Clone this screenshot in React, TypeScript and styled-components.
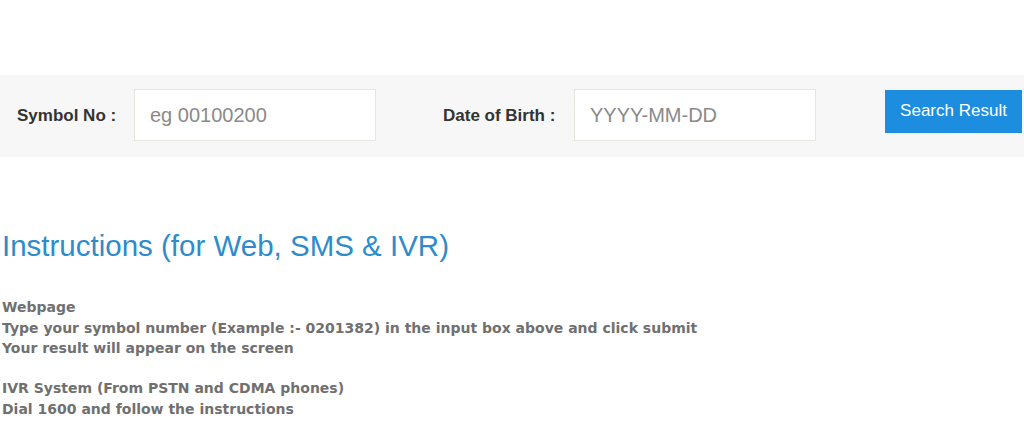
import { FC } from 'react'
import styled, { createGlobalStyle } from 'styled-components'

const GlobalStyle = createGlobalStyle`
  html, body {
    margin: 0;
    padding: 0;
    background: #ffffff;
  }
  body {
    font-family: 'Liberation Sans', Arial, sans-serif;
  }
`

const Page = styled.div`
  width: 1024px;
  height: 433px;
  overflow: hidden;
  padding-top: 75px;
  box-sizing: border-box;
`

const SearchBar = styled.form`
  display: flex;
  align-items: flex-start;
  height: 82px;
  background: #f7f7f7;
  padding: 14px 2px 0 17px;
  box-sizing: border-box;
`

const Field = styled.div<{ $labelWidth: number }>`
  display: flex;
  align-items: center;
  height: 52px;

  label {
    width: ${({ $labelWidth }) => $labelWidth}px;
    font-size: 17px;
    font-weight: 700;
    color: #333;
    padding-top: 2px;
  }
`

const Input = styled.input`
  width: 242px;
  height: 52px;
  box-sizing: border-box;
  border: 1px solid #e6e6df;
  background: #fff;
  padding: 0 15px;
  font-family: 'Liberation Sans', Arial, sans-serif;
  font-size: 20px;
  color: #333;
  outline: none;

  &::placeholder {
    color: #8a8a8a;
  }
`

const Spacer = styled.div<{ $w: number }>`
  width: ${({ $w }) => $w}px;
  flex: none;
`

const SearchButton = styled.button`
  margin-top: 1px;
  margin-left: auto;
  width: 137px;
  height: 43px;
  border: none;
  background: #1d8de0;
  color: #fff;
  font-family: 'Liberation Sans', Arial, sans-serif;
  font-size: 17px;
  padding-bottom: 3px;
  cursor: pointer;
`

const Instructions = styled.section`
  padding: 72px 2px 0;
`

const Heading = styled.h2`
  margin: 0 0 34px;
  font-size: 29.5px;
  font-weight: 400;
  color: #2d8ccb;
  line-height: 34px;
`

const Block = styled.p`
  margin: 0 0 19.5px;
  font-family: 'DejaVu Sans', Tahoma, sans-serif;
  font-size: 14px;
  font-weight: 700;
  line-height: 20.5px;
  color: #707070;
`

const App: FC = () => {
  return (
    <Page>
      <GlobalStyle />
      <SearchBar onSubmit={(e) => e.preventDefault()}>
        <Field $labelWidth={117}>
          <label htmlFor="symbol">Symbol No :</label>
          <Input id="symbol" placeholder="eg 00100200" />
        </Field>
        <Spacer $w={67} />
        <Field $labelWidth={131}>
          <label htmlFor="dob">Date of Birth :</label>
          <Input id="dob" placeholder="YYYY-MM-DD" />
        </Field>
        <SearchButton type="submit">Search Result</SearchButton>
      </SearchBar>

      <Instructions>
        <Heading>Instructions (for Web, SMS &amp; IVR)</Heading>
        <Block>
          Webpage
          <br />
          Type your symbol number (Example :- 0201382) in the input box above and click submit
          <br />
          Your result will appear on the screen
        </Block>
        <Block>
          IVR System (From PSTN and CDMA phones)
          <br />
          Dial 1600 and follow the instructions
        </Block>
      </Instructions>
    </Page>
  )
}

export default App
